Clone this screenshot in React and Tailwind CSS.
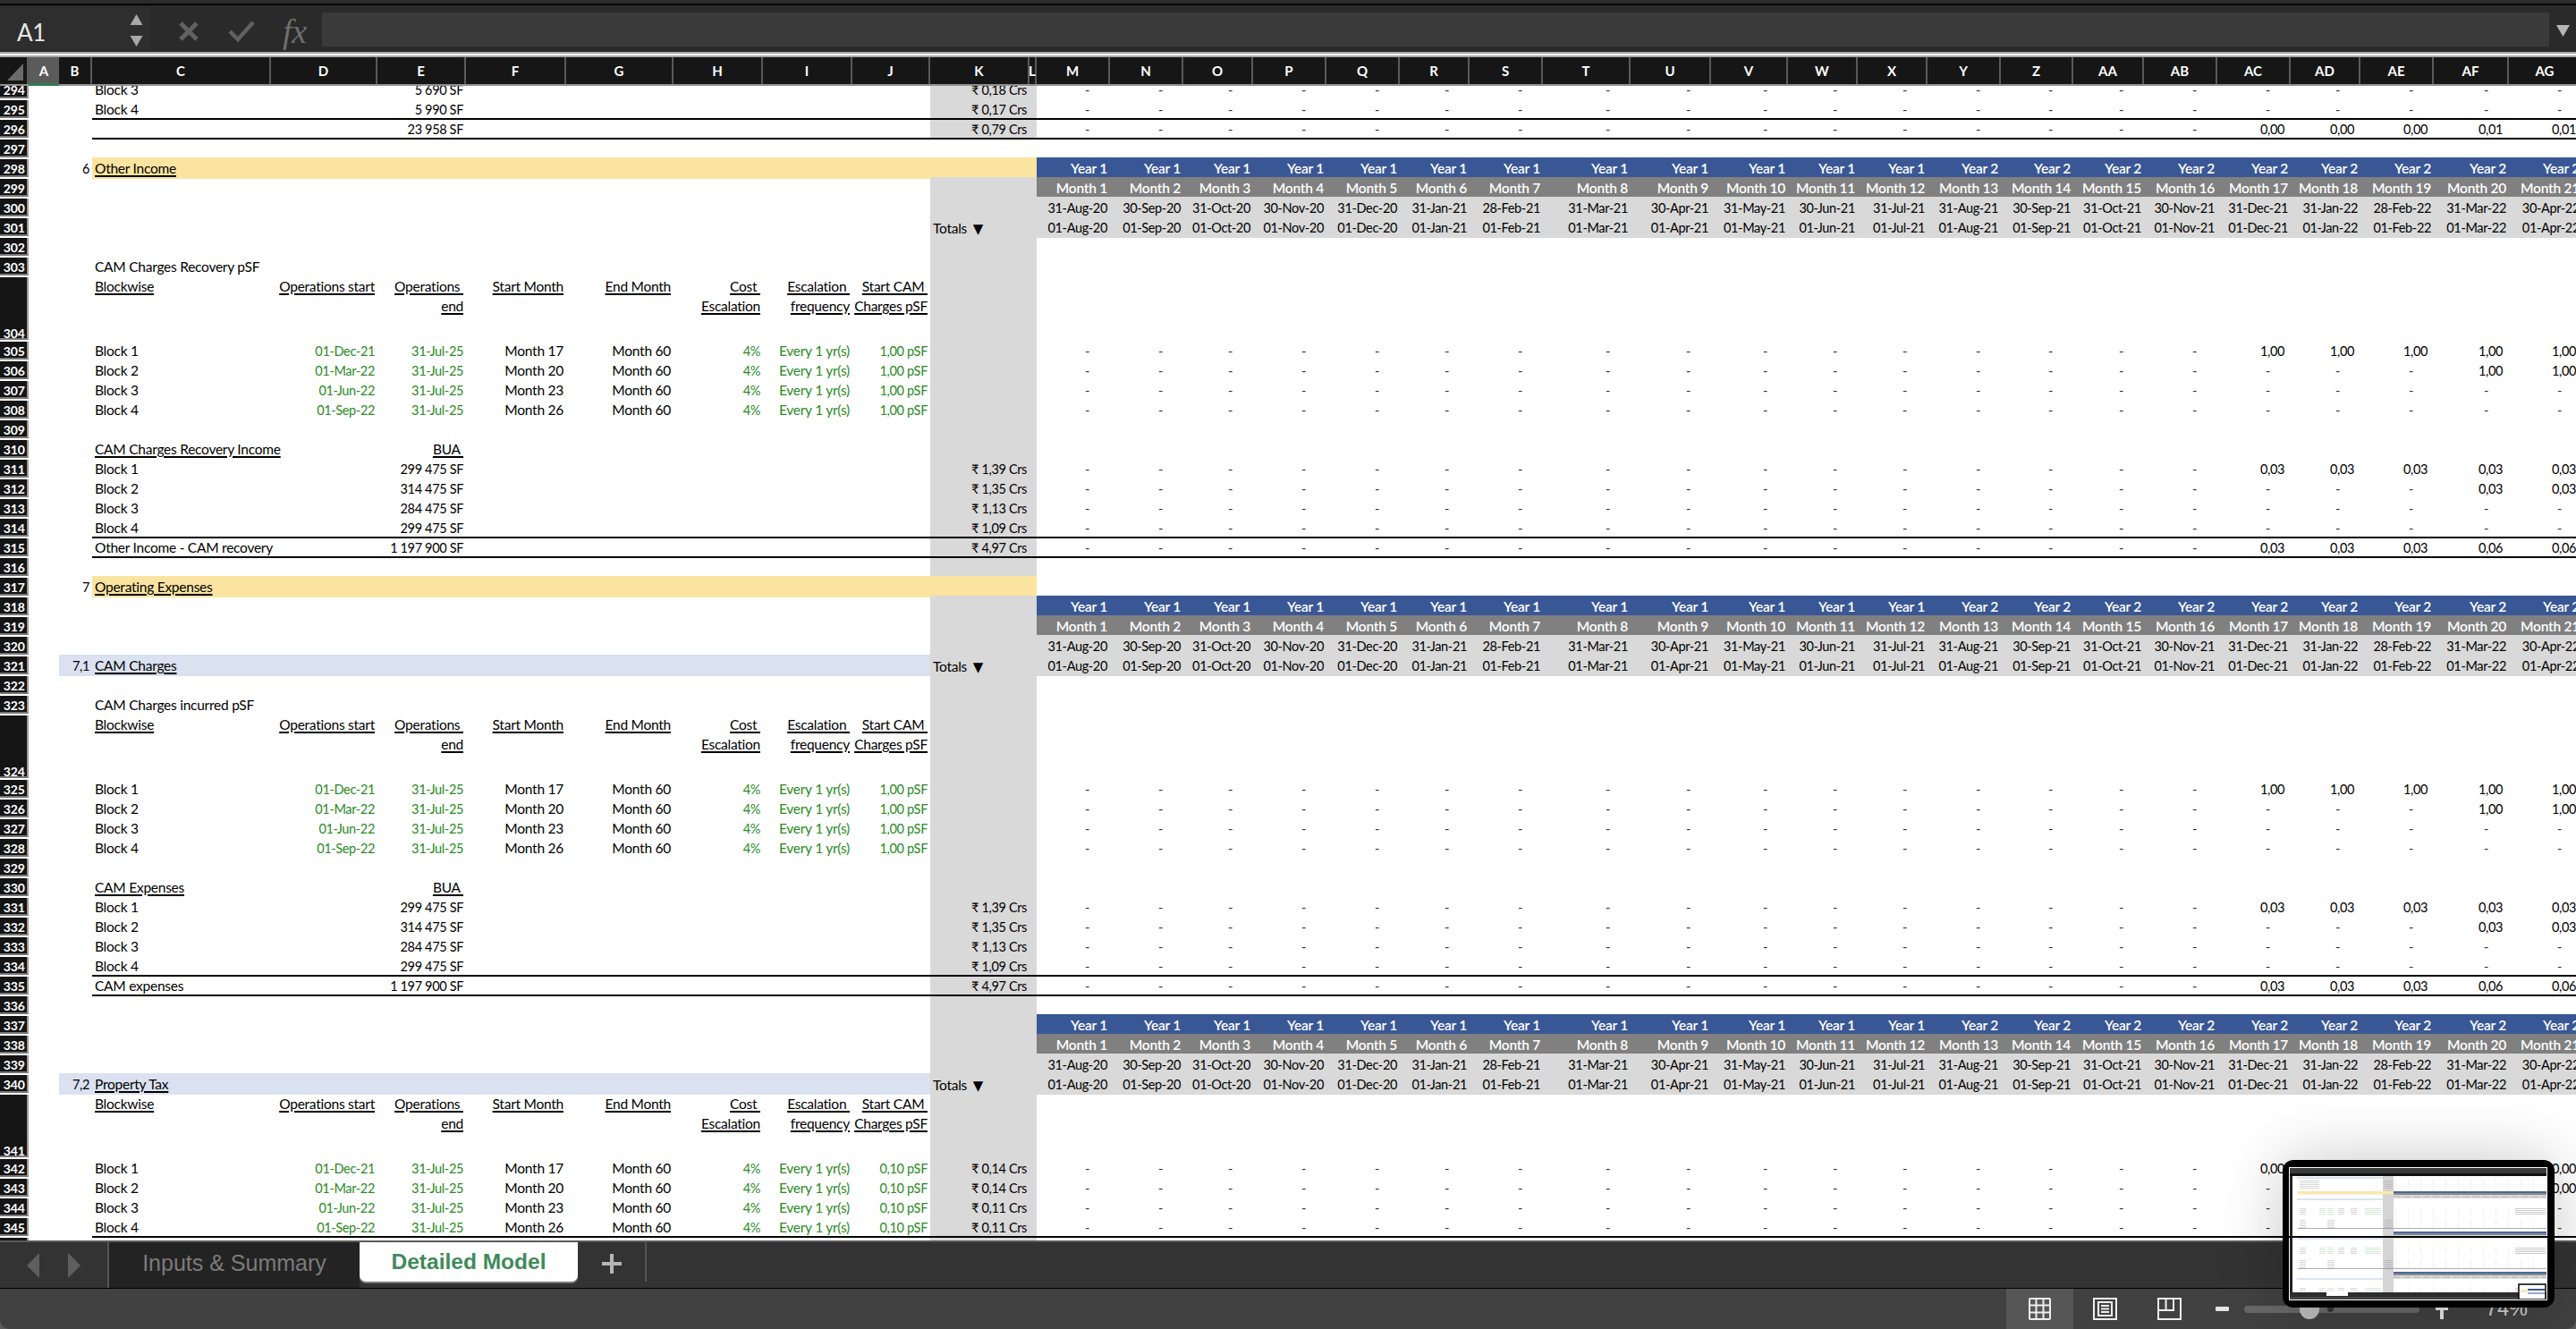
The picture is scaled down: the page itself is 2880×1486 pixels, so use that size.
import React from "react";

const GRID =
  "grid-cols-[32px_34px_37px_200px_119px_99px_112px_120px_100px_100px_87px_111px_8px_82px_82px_78px_82px_82px_78px_82px_98px_90px_86px_78px_78px_82px_81px_79px_82px_82px_78px_82px_84px_82px]";

const LABEL = "text-[15.5px] tracking-[-0.25px]";

const MONTH_COLS = ["M", "N", "O", "P", "Q", "R", "S", "T", "U", "V", "W", "X", "Y", "Z", "AA", "AB", "AC", "AD", "AE", "AF", "AG"];
const ALL_COLS = ["A", "B", "C", "D", "E", "F", "G", "H", "I", "J", "K", "L", ...MONTH_COLS];

const END_DATES = ["31-Aug-20", "30-Sep-20", "31-Oct-20", "30-Nov-20", "31-Dec-20", "31-Jan-21", "28-Feb-21", "31-Mar-21", "30-Apr-21", "31-May-21", "30-Jun-21", "31-Jul-21", "31-Aug-21", "30-Sep-21", "31-Oct-21", "30-Nov-21", "31-Dec-21", "31-Jan-22", "28-Feb-22", "31-Mar-22", "30-Apr-22"];
const START_DATES = ["01-Aug-20", "01-Sep-20", "01-Oct-20", "01-Nov-20", "01-Dec-20", "01-Jan-21", "01-Feb-21", "01-Mar-21", "01-Apr-21", "01-May-21", "01-Jun-21", "01-Jul-21", "01-Aug-21", "01-Sep-21", "01-Oct-21", "01-Nov-21", "01-Dec-21", "01-Jan-22", "01-Feb-22", "01-Mar-22", "01-Apr-22"];
const YEARS = MONTH_COLS.map((_, i) => (i < 12 ? "Year 1" : "Year 2"));
const MONTHS = MONTH_COLS.map((_, i) => `Month ${i + 1}`);

// last five month columns carry numbers, everything before them is a dash
const dash = (...last) => {
  const tail = [...Array(5 - last.length).fill("-"), ...last];
  return [...Array(16).fill("-"), ...tail];
};

const HEAD = {
  C: "Blockwise",
  D: "Operations start",
  E: ["Operations\u00a0", "end"],
  F: "Start Month",
  G: "End Month",
  H: ["Cost\u00a0", "Escalation"],
  I: ["Escalation\u00a0", "frequency"],
  J: ["Start CAM\u00a0", "Charges pSF"],
};

const block = (n, name, start, month, psf, v, k) => ({
  n,
  green: true,
  C: name,
  D: start,
  E: "31-Jul-25",
  F: month,
  G: "Month 60",
  H: "4%",
  I: "Every 1 yr(s)",
  J: psf,
  K: k,
  v,
});

const ROWS = [
  { n: 294, C: "Block 3", E: "5 690 SF", K: "₹ 0,18 Crs", v: dash() },
  { n: 295, C: "Block 4", E: "5 990 SF", K: "₹ 0,17 Crs", v: dash(), line: true },
  { n: 296, E: "23 958 SF", K: "₹ 0,79 Crs", v: dash("0,00", "0,00", "0,00", "0,01", "0,01"), line: true },
  { n: 297, noGray: true },
  { n: 298, B: "6", C: "Other Income", fill: "yellow", head: YEARS, headKind: "year" },
  { n: 299, head: MONTHS, headKind: "month" },
  { n: 300, head: END_DATES, headKind: "date" },
  { n: 301, totals: true, head: START_DATES, headKind: "date" },
  { n: 302 },
  { n: 303, C: "CAM Charges Recovery pSF" },
  { n: 304, tall: true, under: true, ...HEAD },
  block(305, "Block 1", "01-Dec-21", "Month 17", "1,00 pSF", dash("1,00", "1,00", "1,00", "1,00", "1,00")),
  block(306, "Block 2", "01-Mar-22", "Month 20", "1,00 pSF", dash("1,00", "1,00")),
  block(307, "Block 3", "01-Jun-22", "Month 23", "1,00 pSF", dash()),
  block(308, "Block 4", "01-Sep-22", "Month 26", "1,00 pSF", dash()),
  { n: 309 },
  { n: 310, under: true, C: "CAM Charges Recovery Income", E: "BUA\u00a0" },
  { n: 311, C: "Block 1", E: "299 475 SF", K: "₹ 1,39 Crs", v: dash("0,03", "0,03", "0,03", "0,03", "0,03") },
  { n: 312, C: "Block 2", E: "314 475 SF", K: "₹ 1,35 Crs", v: dash("0,03", "0,03") },
  { n: 313, C: "Block 3", E: "284 475 SF", K: "₹ 1,13 Crs", v: dash() },
  { n: 314, C: "Block 4", E: "299 475 SF", K: "₹ 1,09 Crs", v: dash(), line: true },
  { n: 315, C: "Other Income - CAM recovery", E: "1 197 900 SF", K: "₹ 4,97 Crs", v: dash("0,03", "0,03", "0,03", "0,06", "0,06"), line: true },
  { n: 316 },
  { n: 317, B: "7", C: "Operating Expenses", fill: "yellow" },
  { n: 318, head: YEARS, headKind: "year" },
  { n: 319, head: MONTHS, headKind: "month" },
  { n: 320, head: END_DATES, headKind: "date" },
  { n: 321, B: "7,1", C: "CAM Charges", fill: "blue", totals: true, head: START_DATES, headKind: "date" },
  { n: 322 },
  { n: 323, C: "CAM Charges incurred pSF" },
  { n: 324, tall: true, under: true, ...HEAD },
  block(325, "Block 1", "01-Dec-21", "Month 17", "1,00 pSF", dash("1,00", "1,00", "1,00", "1,00", "1,00")),
  block(326, "Block 2", "01-Mar-22", "Month 20", "1,00 pSF", dash("1,00", "1,00")),
  block(327, "Block 3", "01-Jun-22", "Month 23", "1,00 pSF", dash()),
  block(328, "Block 4", "01-Sep-22", "Month 26", "1,00 pSF", dash()),
  { n: 329 },
  { n: 330, under: true, C: "CAM Expenses", E: "BUA\u00a0" },
  { n: 331, C: "Block 1", E: "299 475 SF", K: "₹ 1,39 Crs", v: dash("0,03", "0,03", "0,03", "0,03", "0,03") },
  { n: 332, C: "Block 2", E: "314 475 SF", K: "₹ 1,35 Crs", v: dash("0,03", "0,03") },
  { n: 333, C: "Block 3", E: "284 475 SF", K: "₹ 1,13 Crs", v: dash() },
  { n: 334, C: "Block 4", E: "299 475 SF", K: "₹ 1,09 Crs", v: dash(), line: true },
  { n: 335, C: "CAM expenses", E: "1 197 900 SF", K: "₹ 4,97 Crs", v: dash("0,03", "0,03", "0,03", "0,06", "0,06"), line: true },
  { n: 336 },
  { n: 337, head: YEARS, headKind: "year" },
  { n: 338, head: MONTHS, headKind: "month" },
  { n: 339, head: END_DATES, headKind: "date" },
  { n: 340, B: "7,2", C: "Property Tax", fill: "blue", totals: true, head: START_DATES, headKind: "date" },
  { n: 341, tall: true, under: true, ...HEAD },
  block(342, "Block 1", "01-Dec-21", "Month 17", "0,10 pSF", dash("0,00", "0,00", "0,00", "0,00", "0,00"), "₹ 0,14 Crs"),
  block(343, "Block 2", "01-Mar-22", "Month 20", "0,10 pSF", dash("0,00", "0,00"), "₹ 0,14 Crs"),
  block(344, "Block 3", "01-Jun-22", "Month 23", "0,10 pSF", dash(), "₹ 0,11 Crs"),
  { ...block(345, "Block 4", "01-Sep-22", "Month 26", "0,10 pSF", dash(), "₹ 0,11 Crs"), line: true },
  { n: 346 },
];

const Text = ({ value, under }) => {
  const cls = under ? "underline decoration-[1.5px] underline-offset-[2px]" : "";
  if (Array.isArray(value)) {
    return (
      <div className="flex flex-col items-end">
        {value.map((line) => (
          <span key={line} className={`h-[22px] ${cls}`}>
            {line}
          </span>
        ))}
      </div>
    );
  }
  return <span className={cls}>{value}</span>;
};

const SheetRow = ({ r }) => {
  const size = r.tall ? "h-[72px] grid-rows-[72px]" : "h-[22px] grid-rows-[22px]";

  return (
    <div className={`relative grid ${GRID} ${size}`}>
      {/* row number */}
      <div className="mt-[2px] flex items-start justify-end border-r-2 border-b-2 border-r-[#9a9a9a] border-b-[#777] bg-[#141414] pr-[2px] text-[14px] leading-[21px] font-bold tracking-normal text-white">
        {r.tall ? <span className="mt-[52px]">{r.n}</span> : r.n}
      </div>

      {ALL_COLS.slice(0, 12).map((col) => {
        const yellow = r.fill === "yellow" && col !== "A" && col !== "B";
        const blue = r.fill === "blue" && col !== "A" && col !== "K" && col !== "L";
        const gray = (col === "K" || col === "L") && !r.noGray && !yellow;
        let bg = "";
        if (yellow) bg = "h-[24px] bg-[#fbe4a0]";
        else if (blue) bg = "h-[24px] bg-[#dae1f0]";
        else if (gray) bg = r.tall ? "h-[72px] bg-[#d9d9d9]" : "h-[24px] bg-[#d9d9d9]";

        const isGreen = r.green && ["D", "E", "H", "I", "J"].includes(col);
        const totals = col === "K" && r.totals;
        const alignLeft = col === "C" || totals;
        const under = r.under || (col === "C" && r.fill);
        const wordy = col === "C" || col === "F" || col === "G" || col === "I" || r.under;
        return (
          <div
            key={col}
            className={`flex whitespace-nowrap px-[3px] leading-[22px] ${wordy ? `pt-[1px] ${LABEL}` : "pt-[2px]"} ${alignLeft ? "justify-start" : "justify-end"} ${bg} ${isGreen ? "text-[#2a8a24]" : "text-black"}`}
          >
            {r[col] && <Text value={r[col]} under={under} />}
            {totals && (
              <span className={LABEL}>
                Totals <span className="ml-[3px] font-['DejaVu_Sans',sans-serif] text-[15px]">▼</span>
              </span>
            )}
          </div>
        );
      })}

      {MONTH_COLS.map((col, i) => {
        if (r.head) {
          const kinds = {
            year: `bg-[#3a5795] pt-[1px] font-semibold text-white ${LABEL}`,
            month: `bg-[#808080] pt-[1px] font-semibold text-white ${LABEL}`,
            date: "h-[24px] bg-[#d9d9d9] pt-[2px] text-black",
          };
          return (
            <div key={col} className={`flex justify-end whitespace-nowrap pr-[3px] leading-[22px] ${kinds[r.headKind]}`}>
              {r.head[i]}
            </div>
          );
        }
        if (r.v) {
          const isDash = r.v[i] === "-";
          return (
            <div key={col} className={`flex justify-end whitespace-nowrap pt-[2px] leading-[22px] ${isDash ? "pr-[23px] text-[#333]" : "pr-[7px] text-black"}`}>
              {r.v[i]}
            </div>
          );
        }
        return <div key={col} />;
      })}

      {r.line && <div className="absolute top-[22px] right-0 left-[103px] z-10 h-[2px] bg-black" />}
    </div>
  );
};

const ColumnHeader = () => (
  <div className={`grid ${GRID} h-[32px] shrink-0 grid-rows-[30px] border-b-2 border-[#8f8f8f] bg-[#161616] text-[15px] font-bold tracking-normal text-white`}>
    <div className="flex items-end justify-end border-r-2 border-[#5a5a5a] pr-[4px] pb-[4px]">
      <svg width="18" height="19" viewBox="0 0 18 19">
        <polygon points="18,0 18,19 0,19" fill="#6a6a6a" />
      </svg>
    </div>
    {ALL_COLS.map((col) => {
      const first = col === "A";
      return (
        <div
          key={col}
          className={`relative flex items-center justify-center ${first ? "bg-[#5b5b5b]" : "border-r-2 border-[#5a5a5a]"}`}
        >
          {col}
          {first && <div className="absolute inset-x-0 -bottom-[2px] h-[3px] bg-[#2f7d4f]" />}
        </div>
      );
    })}
  </div>
);

const Triangle = ({ up, className }) => (
  <svg viewBox="0 0 14 12" className={className}>
    <polygon points={up ? "7,0 14,12 0,12" : "0,0 14,0 7,12"} fill="currentColor" />
  </svg>
);

const FormulaBar = () => (
  <div className="flex h-[52px] shrink-0 items-stretch bg-[#2a2a2a]">
    <div className="mt-[2px] flex h-[48px] w-[168px] items-center justify-between bg-[#2e2e2e] pr-[8px] pl-[19px] text-[26px] text-[#e8e8e8]">
      <span className="mt-[8px]">A1</span>
      <div className="mt-[4px] flex flex-col gap-[12px] text-[#a8a8a8]">
        <Triangle up className="h-[12px] w-[15px]" />
        <Triangle className="h-[12px] w-[15px]" />
      </div>
    </div>
    <div className="flex w-[192px] items-center pt-[6px] text-[#616161]">
      <svg viewBox="0 0 24 24" className="ml-[31px] h-[24px] w-[24px]" fill="none" stroke="currentColor" strokeWidth="5">
        <path d="M3 3 L21 21 M21 3 L3 21" />
      </svg>
      <svg viewBox="0 0 30 24" className="ml-[32px] h-[24px] w-[30px]" fill="none" stroke="currentColor" strokeWidth="4.5">
        <path d="M2 12 L11 21 L28 2" />
      </svg>
      <span className="ml-[31px] font-['Liberation_Serif',serif] text-[38px] leading-[38px] italic text-[#6e6e6e]">fx</span>
    </div>
    <div className="mt-[8px] h-[38px] w-[2490px] bg-[#3a3a3a]" />
    <div className="flex flex-1 items-center justify-center text-[#b5b5b5]">
      <Triangle className="mt-[4px] h-[13px] w-[15px]" />
    </div>
  </div>
);

const MiniMap = () => {
  const strips = [26, 71, 116];
  const bands = [10, 34, 78, 123];
  const plainRows = [14, 16, 18, 20, 22];
  const blockRows = [45, 47, 49, 51, 89, 91, 93, 95, 134, 136];
  const incomeRows = [58, 60, 62, 64, 66, 103, 105, 107, 109, 111];
  return (
    <svg viewBox="0 0 287 147" className="block h-[147px] w-[287px]">
      <rect width="287" height="147" fill="#fff" />
      <rect width="287" height="6" fill="#3a3a3a" />
      <rect y="6" width="287" height="3" fill="#111" />
      <rect y="9" width="3" height="130" fill="#222" />
      <rect x="104" y="9" width="12" height="130" fill="#d4d4d4" />
      <rect x="9" y="26" width="107" height="3.5" fill="#fde6a8" />
      {bands.map((y) => (
        <rect key={y} x="8" y={y} width="96" height="2" fill="#dde4f2" />
      ))}
      {strips.map((y) => (
        <g key={y}>
          <rect x="116" y={y} width="171" height="2" fill="#4a67a3" />
          <rect x="116" y={y + 2} width="171" height="2" fill="#8a8a8a" />
          <rect x="116" y={y + 4} width="171" height="4" fill="#d9d9d9" />
          <line x1="116" x2="287" y1={y + 6} y2={y + 6} stroke="#b5b5b5" strokeWidth="1.2" strokeDasharray="8 3" />
        </g>
      ))}
      {plainRows.map((y) => (
        <g key={y}>
          <rect x="11" y={y} width="22" height="0.6" fill="#bbb" />
          <rect x="106" y={y} width="9" height="0.6" fill="#aaa" />
          <line x1="118" x2="287" y1={y} y2={y} stroke="#ccc" strokeWidth="0.6" strokeDasharray="1 13" />
        </g>
      ))}
      {blockRows.map((y) => (
        <g key={y}>
          <rect x="11" y={y} width="7" height="0.6" fill="#bbb" />
          <rect x="33" y={y} width="7" height="0.6" fill="#b8dcb8" />
          <rect x="42" y={y} width="7" height="0.6" fill="#b8dcb8" />
          <rect x="54" y={y} width="7" height="0.6" fill="#bbb" />
          <rect x="68" y={y} width="7" height="0.6" fill="#bbb" />
          <rect x="84" y={y} width="18" height="0.6" fill="#b8dcb8" />
          <line x1="118" x2="250" y1={y} y2={y} stroke="#ccc" strokeWidth="0.6" strokeDasharray="1 13" />
          <rect x="252" y={y} width="34" height="0.6" fill="#aaa" />
        </g>
      ))}
      {incomeRows.map((y) => (
        <g key={y}>
          <rect x="11" y={y} width="7" height="0.6" fill="#bbb" />
          <rect x="42" y={y} width="8" height="0.6" fill="#bbb" />
          <rect x="106" y={y} width="9" height="0.6" fill="#aaa" />
          <line x1="118" x2="287" y1={y} y2={y} stroke="#ccc" strokeWidth="0.6" strokeDasharray="1 13" />
        </g>
      ))}
      <rect x="9" y="67" width="278" height="0.8" fill="#999" />
      <rect x="9" y="112" width="278" height="0.8" fill="#999" />
      <rect y="139" width="287" height="5" fill="#2d2d2d" />
      <rect y="144" width="287" height="3" fill="#444" />
      <rect x="41" y="139" width="24" height="4" fill="#fff" />
      <rect x="256" y="130" width="30" height="17" fill="#fff" stroke="#000" strokeWidth="1.5" />
      <rect x="266" y="135" width="19" height="2" fill="#3b5998" />
      <rect x="266" y="139" width="19" height="2" fill="#9aa9c9" />
      <rect x="258" y="136" width="7" height="3" fill="#fde6a8" />
    </svg>
  );
};

const TabBar = () => (
  <div className="flex h-[53px] shrink-0 items-start border-t-2 border-[#5a5a5a] bg-[#333] font-['Liberation_Sans',sans-serif] tracking-normal">
    <div className="flex h-[51px] w-[120px] items-center justify-center gap-[32px] text-[#5e5e5e]">
      <svg width="14" height="28" viewBox="0 0 14 28">
        <polygon points="14,0 14,28 0,14" fill="currentColor" />
      </svg>
      <svg width="14" height="28" viewBox="0 0 14 28">
        <polygon points="0,0 14,14 0,28" fill="currentColor" />
      </svg>
    </div>
    <div className="flex h-[51px] w-[282px] items-start justify-center border-l-2 border-[#555] bg-[#232323] pt-[5px] text-[25px] text-[#7b7b7b]">
      Inputs &amp; Summary
    </div>
    <div className="flex h-[44px] w-[244px] items-center justify-center rounded-b-[7px] bg-white text-[24.5px] font-bold text-[#3f8a5a] shadow-[0_2px_0_#777]">
      Detailed Model
    </div>
    <div className="flex h-[44px] w-[77px] items-center justify-center border-r-2 border-[#555]">
      <svg width="22" height="22" viewBox="0 0 22 22" className="mt-[4px]">
        <path d="M9 0h4v9h9v4h-9v9H9v-9H0V9h9z" fill="#b5b5b5" />
      </svg>
    </div>
  </div>
);

const StatusBar = () => (
  <div className="flex h-[46px] shrink-0 items-stretch justify-end rounded-b-[10px] border-t border-black bg-[#414141] pr-[54px] font-['Liberation_Sans',sans-serif] tracking-normal text-white">
    <div className="flex w-[75px] items-center justify-center bg-[#565656]">
      <svg width="25" height="25" viewBox="0 0 25 25" fill="none" stroke="#eee" strokeWidth="2">
        <rect x="1" y="1" width="23" height="23" rx="1" />
        <path d="M8.5 1v23M16.5 1v23M1 8.5h23M1 16.5h23" />
      </svg>
    </div>
    <div className="ml-[22px] flex items-center">
      <svg width="27" height="25" viewBox="0 0 27 25" fill="none" stroke="#eee" strokeWidth="2">
        <rect x="1" y="1" width="25" height="23" />
        <rect x="6" y="5" width="15" height="15" />
        <path d="M9 9h9M9 12.5h9M9 16h9" />
      </svg>
    </div>
    <div className="ml-[45px] flex items-center">
      <svg width="27" height="25" viewBox="0 0 27 25" fill="none" stroke="#eee" strokeWidth="2">
        <path d="M1 1h25v23H1z M1 14h17V1 M9.5 1v13" />
      </svg>
    </div>
    <div className="ml-[38px] flex items-center">
      <div className="h-[5px] w-[15px] rounded-[1px] bg-[#e6e6e6]" />
    </div>
    <div className="relative ml-[17px] flex w-[196px] items-center">
      <div className="h-[8px] w-full rounded-full bg-[#686868]" />
      <div className="absolute left-[62px] h-[22px] w-[22px] rounded-full bg-[#bdbdbd]" />
      <div className="absolute left-[93px] h-[7px] w-[7px] rounded-full bg-[#333]" />
    </div>
    <div className="ml-[18px] flex items-center">
      <svg width="14" height="20" viewBox="0 0 14 20" className="mt-[2px]">
        <path d="M5 0h4v6h5v4H9v10H5V10H0V6h5z" fill="#e6e6e6" />
      </svg>
    </div>
    <div className="ml-[42px] flex items-center text-[23.5px] text-[#cfcfcf]">74%</div>
  </div>
);

export default function App() {
  return (
    <div className="relative flex h-[1486px] w-[2880px] flex-col overflow-hidden bg-[#5c5c5c] font-['Lato',sans-serif] text-[14.5px] tracking-[-0.35px]">
      <div className="h-[4px] shrink-0 bg-[#2c2c2c]" />
      <div className="h-[2px] shrink-0 bg-black" />
      <FormulaBar />
      <div className="flex h-[6px] shrink-0 flex-col bg-[#a8a8a8]">
        <div className="mt-[2px] h-[2px] bg-white" />
      </div>
      <ColumnHeader />
      <div className="h-[1291px] shrink-0 overflow-hidden bg-white">
        <div className="-mt-[8px]">
          {ROWS.map((r) => (
            <SheetRow key={r.n} r={r} />
          ))}
        </div>
      </div>
      <TabBar />
      <StatusBar />

      {/* window thumbnail floating over the bottom right corner */}
      <div className="absolute right-[24px] bottom-[24px] h-[165px] w-[304px] rounded-[12px] bg-black pt-[9px] pl-[8px] shadow-[0_0_70px_rgba(0,0,0,0.22)]">
        <div className="w-fit outline outline-1 outline-white">
          <MiniMap />
        </div>
      </div>
    </div>
  );
}
